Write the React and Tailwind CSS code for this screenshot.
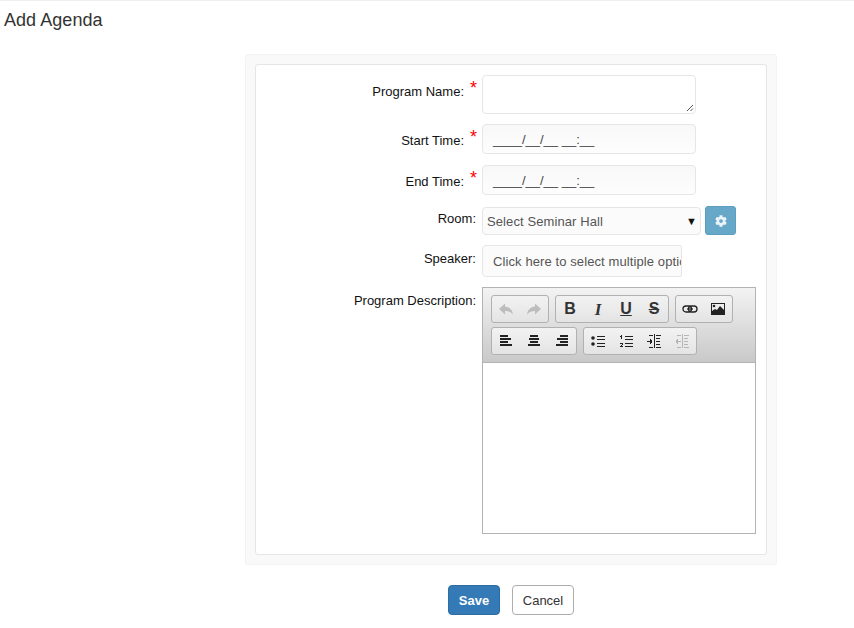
import { FaCog } from 'react-icons/fa'

function Label({ children, required, className = '' }) {
  return (
    <div className={`flex justify-end text-[13px] leading-5 text-[#111] ${className}`}>
      <span className={required ? 'mr-[6px]' : ''}>{children}</span>
      {required && <span className="-mt-px w-[6px] text-[18px] leading-[14px] text-[#f00]">*</span>}
    </div>
  )
}

function Mask() {
  return (
    <div className="h-[30px] w-[214px] rounded border border-[#e6e6e6] bg-gradient-to-b from-[#f8f8f8] to-[#fdfdfd] pl-[10px] text-[13px] leading-[30px] text-[#444]">
      ____/__/__ __:__
    </div>
  )
}

function Icon({ children, className = '' }) {
  return (
    <svg viewBox="0 0 16 16" className={`h-4 w-4 ${className}`} fill="#222">
      {children}
    </svg>
  )
}

function Btn({ children }) {
  return <div className="flex h-[26px] w-7 items-center justify-center">{children}</div>
}

function Group({ children }) {
  return (
    <div className="flex rounded-[3px] border border-[#b1b1b1] bg-gradient-to-b from-[#f2f2f2] to-[#e4e4e4]">
      {children}
    </div>
  )
}

function Lines({ rows, color = '#222' }) {
  return (
    <Icon>
      {rows.map(([x, y, w, h = 1], i) => (
        <rect key={i} x={x} y={y} width={w} height={h} fill={color} />
      ))}
    </Icon>
  )
}

function Toolbar() {
  return (
    <div className="h-[75px] border-b border-[#b3b3b3] bg-gradient-to-b from-[#f3f3f3] to-[#c9c9c9] pl-2 pt-[7px]">
      <div className="flex gap-[6px]">
        <Group>
          <Btn>
            <Icon>
              <path fill="#bdbdbd" d="M7 2.500 1 8l6 5.500V10c3 0 5.500.8 8 3.500C14.500 9 11.500 6 7 5.500z" />
            </Icon>
          </Btn>
          <Btn>
            <Icon>
              <path fill="#bdbdbd" d="M9 2.500 15 8l-6 5.500V10c-3 0-5.500.8-8 3.500C1.500 9 4.500 6 9 5.500z" />
            </Icon>
          </Btn>
        </Group>
        <Group>
          <Btn><span className="text-[16px] leading-none font-bold text-[#333]">B</span></Btn>
          <Btn><span className="font-['Liberation_Serif',serif] text-[17px] leading-none font-bold text-[#333] italic">I</span></Btn>
          <Btn><span className="text-[16px] leading-none font-bold text-[#333] underline">U</span></Btn>
          <Btn><span className="text-[16px] leading-none font-bold text-[#333] line-through">S</span></Btn>
        </Group>
        <Group>
          <Btn>
            <Icon>
              <rect x="1" y="5" width="8.500" height="6" rx="3" fill="none" stroke="#222" strokeWidth="1.300" />
              <rect x="6.500" y="5" width="8.500" height="6" rx="3" fill="none" stroke="#222" strokeWidth="1.300" />
              <rect x="5" y="7.400" width="6" height="1.200" />
            </Icon>
          </Btn>
          <Btn>
            <Icon>
              <path fillRule="evenodd" d="M1 2h14v12H1zM2 3v7l3-2 2 1 3-4 4 4V3z" />
              <circle cx="4" cy="5" r="1.300" />
            </Icon>
          </Btn>
        </Group>
      </div>
      <div className="mt-1 flex gap-[6px]">
        <Group>
          <Btn><Lines rows={[[2, 2, 8, 2], [2, 5, 11, 2], [2, 8, 8, 2], [2, 11, 12, 2]]} /></Btn>
          <Btn><Lines rows={[[4, 2, 8, 2], [3, 5, 10, 2], [4, 8, 8, 2], [2, 11, 12, 2]]} /></Btn>
          <Btn><Lines rows={[[6, 2, 8, 2], [3, 5, 11, 2], [6, 8, 8, 2], [2, 11, 12, 2]]} /></Btn>
        </Group>
        <Group>
          <Btn>
            <Icon>
              <circle cx="3" cy="5" r="1.800" />
              <circle cx="3" cy="11" r="1.800" />
              <rect x="7" y="3" width="8" height="1" />
              <rect x="7" y="6" width="8" height="1" />
              <rect x="7" y="10" width="8" height="1" />
              <rect x="7" y="13" width="8" height="1" />
            </Icon>
          </Btn>
          <Btn>
            <Lines
              rows={[
                [3, 2, 1, 4], [2, 3, 1, 1],
                [2, 10, 3, 1], [4, 11, 1, 1], [3, 12, 1, 1], [2, 13, 3, 1],
                [7, 3, 8], [7, 6, 8], [7, 10, 8], [7, 13, 8],
              ]}
            />
          </Btn>
          <Btn>
            <Lines
              rows={[
                [8, 1, 1, 14],
                [10, 2, 5], [10, 5, 4], [10, 8, 4], [10, 11, 4], [10, 14, 5],
                [1, 8, 5], [5, 7, 1, 3], [4, 6, 1, 5],
                [3, 2, 4], [3, 14, 4],
              ]}
            />
          </Btn>
          <Btn>
            <Lines
              color="#b5b5b5"
              rows={[
                [8, 1, 1, 14],
                [10, 2, 5], [10, 5, 4], [10, 8, 4], [10, 11, 4], [10, 14, 5],
                [2, 8, 5], [2, 7, 1, 3], [3, 6, 1, 5],
                [3, 2, 4], [3, 14, 4],
              ]}
            />
          </Btn>
        </Group>
      </div>
    </div>
  )
}

export default function App() {
  return (
    <div className="h-[628px] w-[854px] overflow-hidden border-t border-[#eeeeee] bg-white font-['Liberation_Sans',Arial,sans-serif]">
      <h1 className="pl-1 pt-[9px] text-[18px] leading-5 font-normal tracking-[0.05px] text-[#333]">Add Agenda</h1>

      <div className="mt-[24px] ml-[245px] h-[511px] w-[532px] rounded-[3px] border border-[#f3f3f3] bg-[#f9f9f9] p-[9px]">
        <div className="grid h-[491px] grid-cols-[220px_1fr] content-start gap-x-[6px] rounded-[3px] border border-[#e6e6e6] bg-white pt-[10px]">
          <Label required className="pt-[7px]">Program Name:</Label>
          <div className="relative h-[39px] w-[214px] rounded border border-[#e6e6e6] bg-white">
            <svg viewBox="0 0 8 8" className="absolute right-px bottom-px h-2 w-2" stroke="#555" fill="none">
              <path d="M1 7 7 1M4.500 7 7 4.500" />
            </svg>
          </div>

          <Label required className="mt-[10px] pt-[7px]">Start Time:</Label>
          <div className="mt-[10px]"><Mask /></div>

          <Label required className="mt-[11px] pt-[7px]">End Time:</Label>
          <div className="mt-[11px]"><Mask /></div>

          <Label className="mt-[12px] pt-[2px]">Room:</Label>
          <div className="mt-[11px] flex items-center gap-1">
            <div className="mt-px flex h-[28px] w-[219px] items-center justify-between rounded border border-[#e6e6e6] bg-[#fbfbfb] pr-[3px] pl-1 text-[13px] text-[#555]">
              <span className="pt-px tracking-[0.1px]">Select Seminar Hall</span>
              <span className="text-[11px] text-[#111]">▼</span>
            </div>
            <button className="flex h-[29px] w-[31px] items-center justify-center rounded-[3px] border border-[#5b9fc0] bg-[#67a8c9] text-[#eaf3f8]">
              <FaCog className="h-3 w-3" />
            </button>
          </div>

          <Label className="mt-[10px] pt-[4px]">Speaker:</Label>
          <div className="mt-[10px] h-[32px] w-[200px] overflow-hidden rounded-l rounded-r-[2px] border border-[#e6e6e6] bg-[#fbfbfb] pt-px pl-[10px] text-[13px] leading-[30px] tracking-[0.1px] whitespace-nowrap text-[#555]">
            Click here to select multiple options
          </div>

          <Label className="mt-[10px] pt-[4px]">Program Description:</Label>
          <div className="mt-[10px] h-[247px] w-[274px] border border-[#b3b3b3] bg-white">
            <Toolbar />
          </div>
        </div>
      </div>

      <div className="mt-5 ml-[448px] flex gap-3">
        <button className="h-[30px] w-[52px] rounded-[4px] border border-[#2e6da4] bg-[#337ab7] pt-px text-[13px] font-bold text-white">Save</button>
        <button className="h-[30px] w-[62px] rounded-[4px] border border-[#adadad] bg-white pt-px text-[13px] text-[#333]">Cancel</button>
      </div>
    </div>
  )
}
